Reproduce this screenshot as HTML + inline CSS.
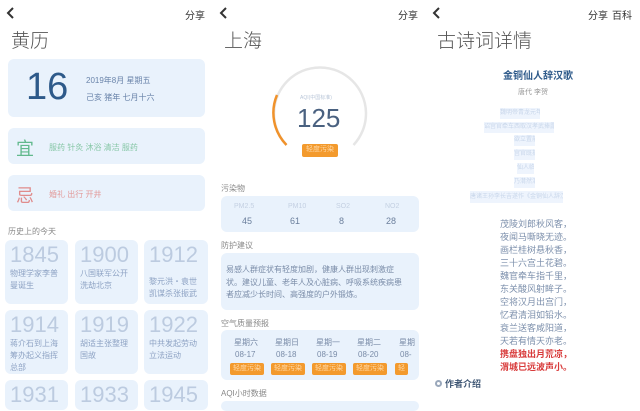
<!DOCTYPE html>
<html><head><meta charset="utf-8"><style>
*{margin:0;padding:0;box-sizing:border-box}
body{width:640px;height:404px;overflow:hidden;background:#fff;font-family:"Liberation Sans","Noto Sans CJK SC",sans-serif;position:relative}
.a{position:absolute;white-space:nowrap}
.card{position:absolute;background:#e9f2fc;border-radius:6px}
.t{font-size:19px;color:#555;font-weight:300}
.sh{font-size:10px;color:#333}
.lbl{font-size:8px;color:#888}
.yr{font-size:22px;color:#bccbe0;font-weight:300;line-height:24px}
.ds{font-size:8px;color:#8ea3c4;line-height:12px;white-space:normal}
.badge{position:absolute;background:#f39a2d;color:#ffd9a8;font-size:7px;text-align:center;border-radius:2px;line-height:12px}
.pl{font-size:9px;color:#7d90ac;left:500px}
.hl{position:absolute;background:#eef4fd;font-size:6px;color:#c8d6ea;line-height:11px;text-align:center;overflow:hidden;white-space:nowrap}
</style></head><body>
<!-- panel 1 -->
<svg class="a" style="left:6px;top:7px" width="10" height="12"><path d="M7 1 L2 6 L7 11" stroke="#333" stroke-width="2" fill="none"/></svg>
<div class="a sh" style="left:185px;top:7px">分享</div>
<div class="a t" style="left:11px;top:26px">黄历</div>
<div class="card" style="left:8px;top:59px;width:197px;height:58px"></div>
<div class="a" style="left:26px;top:66px;font-size:38px;color:#2e5a8a;font-weight:300">16</div>
<div class="a" style="left:86px;top:75px;font-size:8px;color:#6a84aa">2019年8月 星期五</div>
<div class="a" style="left:86px;top:92px;font-size:8px;color:#6a84aa">己亥 猪年 七月十六</div>
<div class="card" style="left:8px;top:128px;width:197px;height:36px"></div>
<div class="a" style="left:16px;top:135px;font-size:18px;color:#62b98d">宜</div>
<div class="a" style="left:49px;top:142px;font-size:8px;color:#86c7a6">服药 针灸 沐浴 清洁 服药</div>
<div class="card" style="left:8px;top:175px;width:197px;height:36px"></div>
<div class="a" style="left:16px;top:182px;font-size:18px;color:#e08c8c">忌</div>
<div class="a" style="left:49px;top:189px;font-size:8px;color:#e29a9a">婚礼 出行 开井</div>
<div class="a lbl" style="left:8px;top:226px">历史上的今天</div>
<div class="card" style="left:5px;top:240px;width:63px;height:64px"></div>
<div class="card" style="left:75px;top:240px;width:63px;height:64px"></div>
<div class="card" style="left:144px;top:240px;width:64px;height:64px"></div>
<div class="card" style="left:5px;top:310px;width:63px;height:64px"></div>
<div class="card" style="left:75px;top:310px;width:63px;height:64px"></div>
<div class="card" style="left:144px;top:310px;width:64px;height:64px"></div>
<div class="card" style="left:5px;top:380px;width:63px;height:30px"></div>
<div class="card" style="left:75px;top:380px;width:63px;height:30px"></div>
<div class="card" style="left:144px;top:380px;width:64px;height:30px"></div>
<div class="a yr" style="left:10px;top:243px">1845</div>
<div class="a ds" style="left:10px;top:268px;width:52px">物理学家李普曼诞生</div>
<div class="a yr" style="left:80px;top:243px">1900</div>
<div class="a ds" style="left:80px;top:268px;width:54px">八国联军公开洗劫北京</div>
<div class="a yr" style="left:149px;top:243px">1912</div>
<div class="a ds" style="left:149px;top:276px;width:54px">黎元洪・袁世凯谋杀张振武</div>
<div class="a yr" style="left:10px;top:313px">1914</div>
<div class="a ds" style="left:10px;top:338px;width:54px">蒋介石到上海筹办起义指挥总部</div>
<div class="a yr" style="left:80px;top:313px">1919</div>
<div class="a ds" style="left:80px;top:338px;width:54px">胡适主张整理国故</div>
<div class="a yr" style="left:149px;top:313px">1922</div>
<div class="a ds" style="left:149px;top:338px;width:54px">中共发起劳动立法运动</div>
<div class="a yr" style="left:10px;top:383px">1931</div>
<div class="a yr" style="left:80px;top:383px">1933</div>
<div class="a yr" style="left:149px;top:383px">1945</div>
<!-- panel 2 -->
<svg class="a" style="left:219px;top:7px" width="10" height="12"><path d="M7 1 L2 6 L7 11" stroke="#333" stroke-width="2" fill="none"/></svg>
<div class="a sh" style="left:398px;top:7px">分享</div>
<div class="a t" style="left:224px;top:26px">上海</div>
<svg class="a" style="left:270px;top:64px" width="100" height="90">
<path d="M16.5 81 A46 46 0 1 1 83.5 81" stroke="#e6e6e6" stroke-width="2.5" fill="none"/>
<path d="M16.5 81 A46 46 0 0 1 7 31" stroke="#f0922b" stroke-width="2.5" fill="none"/>
</svg>
<div class="a" style="left:300px;top:94px;font-size:5px;color:#b9c6d8">AQI(中国标准)</div>
<div class="a" style="left:297px;top:103px;font-size:26px;color:#4a6180;font-weight:300">125</div>
<div class="badge" style="left:302px;top:144px;width:36px;height:13px">轻度污染</div>
<div class="a lbl" style="left:221px;top:183px">污染物</div>
<div class="card" style="left:221px;top:196px;width:198px;height:36px"></div>
<div class="a" style="left:234px;top:203px;font-size:7px;color:#c4d0e2">PM2.5</div>
<div class="a" style="left:288px;top:203px;font-size:7px;color:#c4d0e2">PM10</div>
<div class="a" style="left:336px;top:203px;font-size:7px;color:#c4d0e2">SO2</div>
<div class="a" style="left:385px;top:203px;font-size:7px;color:#c4d0e2">NO2</div>
<div class="a" style="left:242px;top:216px;font-size:9px;color:#6b7f9c">45</div>
<div class="a" style="left:290px;top:216px;font-size:9px;color:#6b7f9c">61</div>
<div class="a" style="left:339px;top:216px;font-size:9px;color:#6b7f9c">8</div>
<div class="a" style="left:386px;top:216px;font-size:9px;color:#6b7f9c">28</div>
<div class="a lbl" style="left:221px;top:240px">防护建议</div>
<div class="card" style="left:221px;top:253px;width:198px;height:57px"></div>
<div class="a" style="left:226px;top:264px;width:180px;font-size:8px;line-height:12.5px;color:#7a8ca8;white-space:normal">易感人群症状有轻度加剧，健康人群出现刺激症状。建议儿童、老年人及心脏病、呼吸系统疾病患者应减少长时间、高强度的户外锻炼。</div>
<div class="a lbl" style="left:221px;top:318px">空气质量预报</div>
<div class="card" style="left:221px;top:330px;width:198px;height:50px"></div>
<div class="a" style="left:234px;top:337px;font-size:8px;color:#7a8ca8">星期六</div>
<div class="a" style="left:275px;top:337px;font-size:8px;color:#7a8ca8">星期日</div>
<div class="a" style="left:316px;top:337px;font-size:8px;color:#7a8ca8">星期一</div>
<div class="a" style="left:357px;top:337px;font-size:8px;color:#7a8ca8">星期二</div>
<div class="a" style="left:399px;top:337px;font-size:8px;color:#7a8ca8">星期</div>
<div class="a" style="left:235px;top:350px;font-size:8px;color:#7a8ca8">08-17</div>
<div class="a" style="left:276px;top:350px;font-size:8px;color:#7a8ca8">08-18</div>
<div class="a" style="left:317px;top:350px;font-size:8px;color:#7a8ca8">08-19</div>
<div class="a" style="left:358px;top:350px;font-size:8px;color:#7a8ca8">08-20</div>
<div class="a" style="left:400px;top:350px;font-size:8px;color:#7a8ca8">08-</div>
<div class="badge" style="left:230px;top:363px;width:34px;height:12px">轻度污染</div>
<div class="badge" style="left:271px;top:363px;width:34px;height:12px">轻度污染</div>
<div class="badge" style="left:312px;top:363px;width:34px;height:12px">轻度污染</div>
<div class="badge" style="left:353px;top:363px;width:34px;height:12px">轻度污染</div>
<div class="badge" style="left:395px;top:363px;width:13px;height:12px;overflow:hidden">轻</div>
<div class="a lbl" style="left:221px;top:388px">AQI小时数据</div>
<div class="card" style="left:221px;top:401px;width:198px;height:10px"></div>
<!-- panel 3 -->
<svg class="a" style="left:432px;top:7px" width="10" height="12"><path d="M7 1 L2 6 L7 11" stroke="#333" stroke-width="2" fill="none"/></svg>
<div class="a sh" style="left:588px;top:7px">分享</div>
<div class="a sh" style="left:612px;top:7px">百科</div>
<div class="a t" style="left:437px;top:26px">古诗词详情</div>
<div class="a" style="left:503px;top:67px;font-size:10px;color:#2e5a8a;font-weight:bold">金铜仙人辞汉歌</div>
<div class="a" style="left:518px;top:87px;font-size:7px;color:#999">唐代 李贺</div>
<div class="hl" style="left:500px;top:108px;width:40px">魏明帝青龙元年八月</div>
<div class="hl" style="left:484px;top:122px;width:70px">诏宫官牵车西取汉孝武捧露盘仙人</div>
<div class="hl" style="left:514px;top:135px;width:21px">欲立置前殿</div>
<div class="hl" style="left:514px;top:149px;width:21px">宫官既拆盘</div>
<div class="hl" style="left:517px;top:163px;width:17px">仙人临载</div>
<div class="hl" style="left:514px;top:177px;width:21px">乃潸然泪下</div>
<div class="hl" style="left:470px;top:191px;width:93px;line-height:12px">唐诸王孙李长吉遂作《金铜仙人辞汉歌》</div>
<div class="a pl" style="top:217px">茂陵刘郎秋风客，</div>
<div class="a pl" style="top:230px">夜闻马嘶晓无迹。</div>
<div class="a pl" style="top:243px">画栏桂树悬秋香，</div>
<div class="a pl" style="top:256px">三十六宫土花碧。</div>
<div class="a pl" style="top:269px">魏官牵车指千里，</div>
<div class="a pl" style="top:282px">东关酸风射眸子。</div>
<div class="a pl" style="top:295px">空将汉月出宫门，</div>
<div class="a pl" style="top:308px">忆君清泪如铅水。</div>
<div class="a pl" style="top:321px">衰兰送客咸阳道，</div>
<div class="a pl" style="top:334px">天若有情天亦老。</div>
<div class="a pl" style="top:347px;color:#d83a3a;font-weight:bold">携盘独出月荒凉，</div>
<div class="a pl" style="top:360px;color:#d83a3a;font-weight:bold">渭城已远波声小。</div>
<div class="a" style="left:435px;top:380px;width:7px;height:7px;border:2px solid #9aa8bb;border-radius:50%"></div>
<div class="a" style="left:445px;top:377px;font-size:9px;color:#3d5573;font-weight:bold">作者介绍</div>
</body></html>
